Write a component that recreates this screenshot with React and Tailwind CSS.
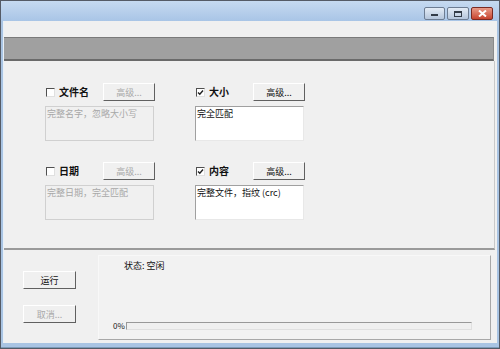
import React from "react";

const font = { fontFamily: '"Noto Sans CJK SC", "Liberation Sans", sans-serif' };

function Check({ checked }) {
    return (
        <div className="w-[9px] h-[9px] bg-white border-l border-t border-l-[#505050] border-t-[#505050] border-r border-b border-r-[#e0e0e0] border-b-[#e0e0e0] flex items-center justify-center">
            {checked && (
                <svg width="7" height="7" viewBox="0 0 7 7">
                    <path d="M1 3.5 L2.8 5.3 L6 1.5" stroke="#222" strokeWidth="1.4" fill="none" />
                </svg>
            )}
        </div>
    );
}

function Btn({ children, disabled, className = "" }) {
    return (
        <div
            className={`h-[18px] bg-[#f0f0f0] border border-t-white border-l-white border-r-[#606060] border-b-[#606060] flex items-center justify-center text-[9px] leading-none ${disabled ? "text-[#a8a8a8]" : "text-[#111]"} ${className}`}
        >
            {children}
        </div>
    );
}

function Field({ label, checked, text }) {
    return (
        <div className="w-[110px] flex flex-col">
            <div className="h-[18px] flex items-center">
                <div className="ml-[1px]"><Check checked={checked} /></div>
                <span className="ml-[4px] text-[10px] font-bold text-[#111] leading-none">{label}</span>
                <Btn disabled={!checked} className="ml-auto w-[52px]">高级...</Btn>
            </div>
            <div
                className={`mt-[5px] h-[35px] w-[109px] border px-[1px] pt-[2px] text-[9px] leading-none ${checked ? "bg-white border-t-[#a0a0a0] border-l-[#a0a0a0] border-r-[#e8e8e8] border-b-[#e8e8e8] text-[#111]" : "bg-[#f0f0f0] border-[#d0d0d0] text-[#a8a8a8]"}`}
            >
                {text}
            </div>
        </div>
    );
}

export default function App() {
    return (
        <div className="w-[500px] h-[349px] bg-[#a9c4e3] flex flex-col overflow-hidden border border-[#555b66]" style={font}>
            {/* Title bar */}
            <div className="h-[20px] bg-gradient-to-b from-[#c6daf0] to-[#a9c5e6] flex items-start justify-end pr-[6px] pt-[6px] gap-[2px] shrink-0">
                <div className="w-[21px] h-[13px] rounded-[2px] border border-[#6d7d93] bg-gradient-to-b from-[#e4ecf6] to-[#b5c6dc] flex items-end justify-center pb-[3px]">
                    <div className="w-[7px] h-[2px] bg-[#333c48]" />
                </div>
                <div className="w-[22px] h-[13px] rounded-[2px] border border-[#6d7d93] bg-gradient-to-b from-[#e4ecf6] to-[#b5c6dc] flex items-center justify-center">
                    <div className="w-[8px] h-[6px] border border-t-2 border-[#333c48]" />
                </div>
                <div className="w-[22px] h-[13px] rounded-[2px] border border-[#7a2a22] bg-gradient-to-b from-[#e89a88] to-[#c6412e] flex items-center justify-center">
                    <svg width="9" height="7" viewBox="0 0 9 7">
                        <path d="M1 0.5 L8 6.5 M8 0.5 L1 6.5" stroke="white" strokeWidth="2" />
                    </svg>
                </div>
            </div>

            {/* Client area */}
            <div className="flex-1 mx-[2px] bg-[#f0f0f0] flex flex-col border-l border-[#e8f0f8]">
                <div className="h-[16px] shrink-0" />
                <div className="h-[24px] mr-[3px] bg-[#a0a0a0] border-t border-t-[#7a7a7a] border-b-2 border-b-[#6a6a6a] border-r border-r-[#8a8a8a] shrink-0" />

                {/* Top group */}
                <div className="h-[189px] mr-[2px] border-b-2 border-b-[#9a9a9a] border-r border-r-[#c8c8c8] shrink-0 pl-[41px] pt-[22px] flex flex-col gap-[21px]">
                    <div className="flex gap-[40px]">
                        <Field label="文件名" checked={false} text="完整名字，忽略大小写" />
                        <Field label="大小" checked={true} text="完全匹配" />
                    </div>
                    <div className="flex gap-[40px]">
                        <Field label="日期" checked={false} text="完整日期，完全匹配" />
                        <Field label="内容" checked={true} text="完整文件，指纹 (crc)" />
                    </div>
                </div>

                {/* Bottom */}
                <div className="flex-1 flex pt-[5px] pb-[3px]">
                    <div className="w-[94px] flex flex-col pl-[19px] pt-[16px] gap-[16px]">
                        <Btn className="w-[53px]">运行</Btn>
                        <Btn disabled className="w-[53px]">取消...</Btn>
                    </div>
                    <div className="w-[393px] border border-t-[#f8f8f8] border-l-[#f8f8f8] border-r-[#a8a8a8] border-b-[#a8a8a8] bg-[#f2f2f2] flex flex-col">
                        <div className="pl-[25px] pt-[5px] text-[9px] leading-none text-[#111]">状态:  空闲</div>
                        <div className="mt-auto mb-[9px] flex items-center pl-[14px]">
                            <span className="text-[8px] leading-none text-[#222] w-[13px]">0%</span>
                            <div className="w-[346px] h-[8px] border border-t-[#999] border-l-[#999] border-r-[#e0e0e0] border-b-[#e0e0e0] bg-[#f0f0f0]" />
                        </div>
                    </div>
                </div>
            </div>
            <div className="h-[5px] shrink-0 border-b border-[#7d9ab8]" />
        </div>
    );
}
